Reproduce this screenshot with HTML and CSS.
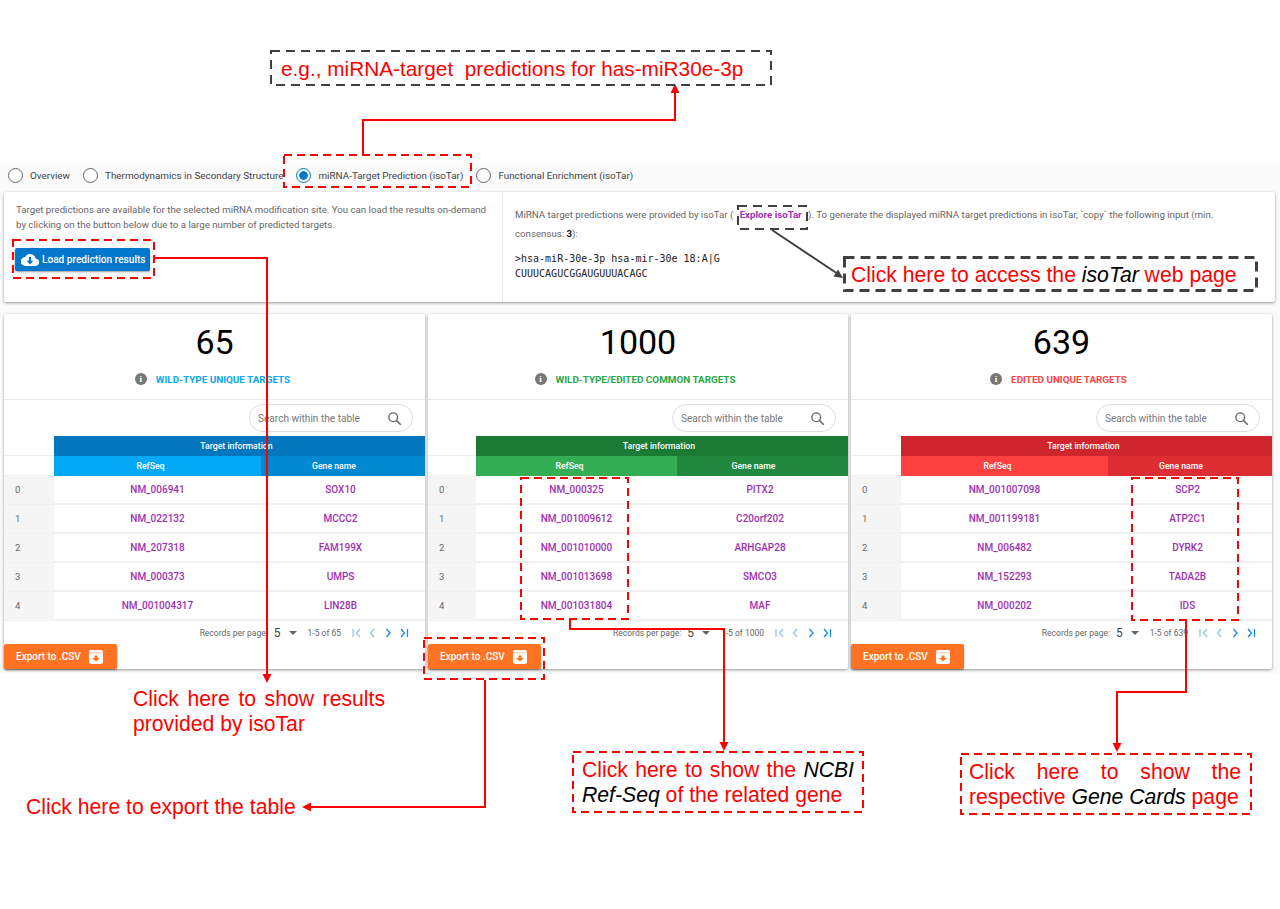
FILE: index.html
```html
<!DOCTYPE html>
<html>
<head>
    <title>miRNA-Target Prediction</title>
    <link rel="stylesheet" href="styles.css">
</head>
<body>
    <div class="page">
        <div class="app">
            <div class="tabs">
                <label class="tab"><span class="radio"></span>Overview</label>
                <label class="tab"><span class="radio"></span>Thermodynamics in Secondary Structure</label>
                <label class="tab"><span class="radio on"></span>miRNA-Target Prediction (isoTar)</label>
                <label class="tab"><span class="radio"></span>Functional Enrichment (isoTar)</label>
            </div>

            <div class="info-card">
                <div class="info-left">
                    <p>Target predictions are available for the selected miRNA modification site. You can load the results on-demand by clicking on the button below due to a large number of predicted targets.</p>
                    <button class="load-btn">
                        <svg width="18" height="14" viewBox="0 0 24 18"><path fill="#fff" d="M19.4 7A7.5 7.5 0 0 0 5.4 5 6 6 0 0 0 6 17h13a5 5 0 0 0 .4-10z"/><path fill="#0277cc" d="M10.5 5h3v5h3L12 15l-4.500-5h3z"/></svg>
                        Load prediction results
                    </button>
                </div>
                <div class="info-right">
                    <p>MiRNA target predictions were provided by isoTar ( <a class="explore">Explore isoTar</a> ). To generate the displayed miRNA target predictions in isoTar, `copy` the following input (min. consensus: <b>3</b>):</p>
                    <pre class="mono">&gt;hsa-miR-30e-3p hsa-mir-30e 18:A|G
CUUUCAGUCGGAUGUUUACAGC</pre>
                </div>
            </div>

            <div class="cards">
                <section class="card blue">
                    <div class="count">65</div>
                    <div class="label"><span class="info-dot">i</span>WILD-TYPE UNIQUE TARGETS</div>
                    <div class="search-row">
                        <div class="search">Search within the table
                            <svg width="15" height="15" viewBox="0 0 24 24"><circle cx="10" cy="10" r="7" fill="none" stroke="#666" stroke-width="2.200"/><path d="M15 15l7 7" stroke="#666" stroke-width="2.400"/></svg>
                        </div>
                    </div>
                    <div class="table">
                        <div class="head-top"><span></span><div class="h1">Target information</div></div>
                        <div class="head-sub"><span></span><div class="h2">RefSeq</div><div class="h3">Gene name</div></div>
                        <div class="row"><span class="idx">0</span><a>NM_006941</a><a>SOX10</a></div>
                        <div class="row"><span class="idx">1</span><a>NM_022132</a><a>MCCC2</a></div>
                        <div class="row"><span class="idx">2</span><a>NM_207318</a><a>FAM199X</a></div>
                        <div class="row"><span class="idx">3</span><a>NM_000373</a><a>UMPS</a></div>
                        <div class="row"><span class="idx">4</span><a>NM_001004317</a><a>LIN28B</a></div>
                    </div>
                    <div class="pager">
                        <span>Records per page:</span><span class="per">5</span><span class="caret"></span><span class="range">1-5 of 65</span>
                        <svg class="nav" width="60" height="10" viewBox="0 0 60 10"><path d="M2 1v8M9 1L5.500 5 9 9" class="dim"/><path d="M23 1l-3.500 4 3.500 4" class="dim"/><path d="M35.500 1L39 5l-3.500 4"/><path d="M50 1l3.500 4L50 9M56.500 1v8"/></svg>
                    </div>
                    <button class="export">Export to .CSV
                        <svg width="14" height="14" viewBox="0 0 14 14"><path fill="#fff" d="M2 0h10a2 2 0 0 1 2 2v10a2 2 0 0 1-2 2H2a2 2 0 0 1-2-2V2a2 2 0 0 1 2-2z"/><path fill="#ff7322" d="M5.500 5.500h3V8H11l-4 3.500L3 8h2.500z"/><path fill="#ffb48c" d="M0 2.500h14v.7H0z"/></svg>
                    </button>
                </section>

                <section class="card green">
                    <div class="count">1000</div>
                    <div class="label"><span class="info-dot">i</span>WILD-TYPE/EDITED COMMON TARGETS</div>
                    <div class="search-row">
                        <div class="search">Search within the table
                            <svg width="15" height="15" viewBox="0 0 24 24"><circle cx="10" cy="10" r="7" fill="none" stroke="#666" stroke-width="2.200"/><path d="M15 15l7 7" stroke="#666" stroke-width="2.400"/></svg>
                        </div>
                    </div>
                    <div class="table">
                        <div class="head-top"><span></span><div class="h1">Target information</div></div>
                        <div class="head-sub"><span></span><div class="h2">RefSeq</div><div class="h3">Gene name</div></div>
                        <div class="row"><span class="idx">0</span><a>NM_000325</a><a>PITX2</a></div>
                        <div class="row"><span class="idx">1</span><a>NM_001009612</a><a>C20orf202</a></div>
                        <div class="row"><span class="idx">2</span><a>NM_001010000</a><a>ARHGAP28</a></div>
                        <div class="row"><span class="idx">3</span><a>NM_001013698</a><a>SMCO3</a></div>
                        <div class="row"><span class="idx">4</span><a>NM_001031804</a><a>MAF</a></div>
                    </div>
                    <div class="pager">
                        <span>Records per page:</span><span class="per">5</span><span class="caret"></span><span class="range">1-5 of 1000</span>
                        <svg class="nav" width="60" height="10" viewBox="0 0 60 10"><path d="M2 1v8M9 1L5.500 5 9 9" class="dim"/><path d="M23 1l-3.500 4 3.500 4" class="dim"/><path d="M35.500 1L39 5l-3.500 4"/><path d="M50 1l3.500 4L50 9M56.500 1v8"/></svg>
                    </div>
                    <button class="export">Export to .CSV
                        <svg width="14" height="14" viewBox="0 0 14 14"><path fill="#fff" d="M2 0h10a2 2 0 0 1 2 2v10a2 2 0 0 1-2 2H2a2 2 0 0 1-2-2V2a2 2 0 0 1 2-2z"/><path fill="#ff7322" d="M5.500 5.500h3V8H11l-4 3.500L3 8h2.500z"/><path fill="#ffb48c" d="M0 2.500h14v.7H0z"/></svg>
                    </button>
                </section>

                <section class="card red">
                    <div class="count">639</div>
                    <div class="label"><span class="info-dot">i</span>EDITED UNIQUE TARGETS</div>
                    <div class="search-row">
                        <div class="search">Search within the table
                            <svg width="15" height="15" viewBox="0 0 24 24"><circle cx="10" cy="10" r="7" fill="none" stroke="#666" stroke-width="2.200"/><path d="M15 15l7 7" stroke="#666" stroke-width="2.400"/></svg>
                        </div>
                    </div>
                    <div class="table">
                        <div class="head-top"><span></span><div class="h1">Target information</div></div>
                        <div class="head-sub"><span></span><div class="h2">RefSeq</div><div class="h3">Gene name</div></div>
                        <div class="row"><span class="idx">0</span><a>NM_001007098</a><a>SCP2</a></div>
                        <div class="row"><span class="idx">1</span><a>NM_001199181</a><a>ATP2C1</a></div>
                        <div class="row"><span class="idx">2</span><a>NM_006482</a><a>DYRK2</a></div>
                        <div class="row"><span class="idx">3</span><a>NM_152293</a><a>TADA2B</a></div>
                        <div class="row"><span class="idx">4</span><a>NM_000202</a><a>IDS</a></div>
                    </div>
                    <div class="pager">
                        <span>Records per page:</span><span class="per">5</span><span class="caret"></span><span class="range">1-5 of 639</span>
                        <svg class="nav" width="60" height="10" viewBox="0 0 60 10"><path d="M2 1v8M9 1L5.500 5 9 9" class="dim"/><path d="M23 1l-3.500 4 3.500 4" class="dim"/><path d="M35.500 1L39 5l-3.500 4"/><path d="M50 1l3.500 4L50 9M56.500 1v8"/></svg>
                    </div>
                    <button class="export">Export to .CSV
                        <svg width="14" height="14" viewBox="0 0 14 14"><path fill="#fff" d="M2 0h10a2 2 0 0 1 2 2v10a2 2 0 0 1-2 2H2a2 2 0 0 1-2-2V2a2 2 0 0 1 2-2z"/><path fill="#ff7322" d="M5.500 5.500h3V8H11l-4 3.500L3 8h2.500z"/><path fill="#ffb48c" d="M0 2.500h14v.7H0z"/></svg>
                    </button>
                </section>
            </div>
        </div>

        <!-- annotations drawn over the screenshot -->
        <svg class="connectors" width="1280" height="909" viewBox="0 0 1280 909">
            <g fill="none" stroke="#f00" stroke-width="2">
                <path d="M363 154V120H675V90"/>
                <path d="M155 258H267V676"/>
                <path d="M485 680V807H308"/>
                <path d="M570 619V629H724V745"/>
                <path d="M1186 620V692H1117V746"/>
            </g>
            <g fill="#f00">
                <path d="M675 84l-4.500 9h9z"/>
                <path d="M267 683l-4.500-9h9z"/>
                <path d="M302 807l9-4.500v9z"/>
                <path d="M724 751l-4.500-9h9z"/>
                <path d="M1117 752l-4.500-9h9z"/>
            </g>
            <path d="M772 230L838 274" stroke="#404040" stroke-width="2" fill="none"/>
            <path d="M843 278l-9.500-1.500 4.500-7z" fill="#404040"/>

            <g fill="none" stroke="#404040" stroke-width="2" stroke-dasharray="9 6">
                <rect x="271" y="51" width="500" height="34"/>
                <rect x="738" y="206" width="69" height="23"/>
            </g>
            <rect x="844.500" y="257.500" width="412" height="33" fill="none" stroke="#404040" stroke-width="3" stroke-dasharray="10 6"/>
            <g fill="none" stroke="#f00" stroke-width="2" stroke-dasharray="8 5">
                <rect x="284" y="155" width="187" height="32"/>
                <rect x="13" y="240" width="141" height="38"/>
                <rect x="424" y="638" width="120" height="41"/>
                <rect x="521" y="478" width="107" height="141"/>
                <rect x="1132" y="478" width="106" height="142"/>
                <rect x="573" y="752" width="290" height="60"/>
                <rect x="961" y="754" width="290" height="60"/>
            </g>
        </svg>

        <div class="note n-species">e.g., miRNA-target&nbsp; predictions for has-miR30e-3p</div>
        <div class="note n-access">Click here to access the <i>isoTar</i> web page</div>
        <div class="note n-results">Click here to show results provided by isoTar</div>
        <div class="note n-csv">Click here to export the table</div>
        <div class="note n-ncbi">Click here to show the <i>NCBI Ref-Seq</i> of the related gene</div>
        <div class="note n-cards">Click here to show the respective <i>Gene Cards</i> page</div>
    </div>
</body>
</html>
```

FILE: styles.css
```css
* {
    box-sizing: border-box;
}

body {
    margin: 0;
    background-color: #fff;
    font-family: Roboto, "Liberation Sans", sans-serif;
}

.page {
    position: relative;
    width: 1280px;
    height: 909px;
    padding-top: 163px;
    overflow: hidden;
}

.app {
    background-color: #fafafa;
    height: 511px;
    padding: 0 4px;
    color: #666;
    font-size: 9.700px;
}

/* tab row */
.tabs {
    display: flex;
    gap: 13px;
    height: 25px;
    margin-bottom: 4px;
    padding-left: 4px;
    align-items: center;
}

.tab {
    display: flex;
    align-items: center;
    gap: 7px;
    color: #444;
    font-size: 9.900px;
}

.radio {
    width: 15px;
    height: 15px;
    border: 1px solid #666;
    border-radius: 50%;
    background-color: #fff;
}

.radio.on {
    border: 1.5px solid #0277cc;
    background: radial-gradient(circle, #0277cc 0 4px, #fff 4.600px);
}

/* top card */
.info-card {
    display: grid;
    grid-template-columns: 499px 1fr;
    width: 1271px;
    height: 110px;
    background-color: #fff;
    border-radius: 2px;
    box-shadow: 0 1px 3px rgba(0, 0, 0, 0.4);
}

.info-left {
    padding: 10px 10px 0 12px;
    border-right: 1px solid #e8e8e8;
}

.info-left p {
    margin: 0;
    line-height: 15px;
}

.load-btn {
    display: flex;
    align-items: center;
    gap: 3px;
    width: 135px;
    height: 23px;
    margin: 16px 0 0 -1px;
    padding: 0 0 0 6px;
    border: none;
    border-radius: 2px;
    background-color: #0277cc;
    color: #fff;
    font: 500 10.100px Roboto, sans-serif;
    box-shadow: 0 1px 2px rgba(0, 0, 0, 0.4);
}

.info-right {
    padding: 13px 50px 0 12px;
}

.info-right p {
    margin: 0;
    line-height: 19px;
}

.info-right b {
    color: #222;
}

.explore {
    margin: 0 4px;
    color: #a02fb4;
    font-weight: 700;
}

.mono {
    margin: 8px 0 0;
    color: #222;
    font: 10px/15px "DejaVu Sans Mono", monospace;
}

/* the three result cards */
.cards {
    display: grid;
    grid-template-columns: 421px 420px 421px;
    gap: 3px;
    margin-top: 12px;
}

.card {
    position: relative;
    height: 355px;
    background-color: #fff;
    border-radius: 2px;
    box-shadow: 0 1px 3px rgba(0, 0, 0, 0.4);
}

.count {
    padding-top: 8px;
    height: 48px;
    color: #000;
    font-size: 34px;
    line-height: 40px;
    text-align: center;
}

.label {
    display: flex;
    justify-content: center;
    align-items: center;
    gap: 9px;
    height: 38px;
    padding-bottom: 3px;
    border-bottom: 1px solid #e8e8e8;
    font-size: 9.900px;
    font-weight: 700;
}

.blue .label { color: #03a9f4; padding-right: 4px; }
.green .label { color: #28a745; padding-right: 6px; }
.red .label { color: #ff4444; padding-right: 6px; }

.info-dot {
    width: 12px;
    height: 12px;
    border-radius: 50%;
    background-color: #777;
    color: #fff;
    font: 700 9px/12px "Liberation Serif", serif;
    text-align: center;
}

.search-row {
    display: flex;
    justify-content: flex-end;
    height: 36px;
    padding: 4px 12px 0 0;
}

.search {
    display: flex;
    justify-content: space-between;
    align-items: center;
    width: 164px;
    height: 28px;
    padding: 0 10px 0 8px;
    border: 1px solid #ddd;
    border-radius: 14px;
    color: #777;
    font-size: 10.100px;
}

.head-top,
.head-sub,
.row {
    display: grid;
    grid-template-columns: 50px 207px 1fr;
}

.green .head-top,
.green .head-sub,
.green .row {
    grid-template-columns: 48px 201px 1fr;
}

.head-top {
    height: 20px;
    grid-template-columns: 50px 1fr;
    border-bottom: 1px solid #eee;
}

.green .head-top {
    grid-template-columns: 48px 1fr;
}

.head-sub {
    height: 20px;
    border-bottom: 1px solid #eee;
}

.h1,
.h2,
.h3 {
    padding-right: 14px;
    color: #fff;
    font-size: 8.700px;
    font-weight: 500;
    line-height: 20px;
    text-align: center;
}

.h1 {
    padding-right: 6px;
}

.h3 {
    padding-right: 18px;
}

.blue .h1 { background-color: #0277bd; }
.blue .h2 { background-color: #03a9f4; }
.blue .h3 { background-color: #0288d1; }
.green .h1 { background-color: #1b7a34; }
.green .h2 { background-color: #34ae55; }
.green .h3 { background-color: #23883f; }
.red .h1 { background-color: #cf252c; }
.red .h2 { background-color: #ff4040; }
.red .h3 { background-color: #dc2d33; }

.row {
    height: 29px;
    border-bottom: 2px solid #f0f0f0;
    line-height: 28px;
    text-align: center;
}

.row a {
    color: #a02fb4;
    font-size: 10px;
    font-weight: 500;
}

.row a:last-child {
    padding-right: 5px;
}

.idx {
    padding-left: 11px;
    background-color: #f5f5f5;
    color: #666;
    font-size: 9.500px;
    text-align: left;
}

.pager {
    display: flex;
    justify-content: flex-end;
    align-items: center;
    height: 23px;
    padding-right: 14px;
    font-size: 8.500px;
}

.per {
    margin-left: 6px;
    color: #444;
    font-size: 12px;
}

.caret {
    width: 0;
    height: 0;
    margin: 0 11px 0 8px;
    border: 4px solid transparent;
    border-top-color: #666;
    border-bottom: none;
}

.nav {
    margin-left: 10px;
    fill: none;
    stroke: #1e88e5;
    stroke-width: 1.300;
}

.nav .dim {
    stroke: #90c4f0;
}

.export {
    position: absolute;
    left: 0;
    bottom: 0;
    display: flex;
    align-items: center;
    justify-content: space-between;
    width: 113px;
    height: 25px;
    padding: 0 14px 0 12px;
    border: none;
    border-radius: 2px;
    background-color: #ff7322;
    color: #fff;
    font: 500 10px Roboto, sans-serif;
    box-shadow: 0 1px 2px rgba(0, 0, 0, 0.4);
}

/* annotations */
.connectors {
    position: absolute;
    top: 0;
    left: 0;
}

.note {
    position: absolute;
    color: #f00;
    font-family: "Liberation Sans", Arial, sans-serif;
    font-size: 21.200px;
    line-height: 25px;
}

.note i {
    color: #000;
}

.n-species { left: 281px; top: 56px; font-size: 20.800px; white-space: nowrap; }
.n-access { left: 851px; top: 262px; white-space: nowrap; }
.n-results { left: 133px; top: 686px; width: 252px; text-align: justify; }
.n-csv { left: 26px; top: 794px; }
.n-ncbi { left: 582px; top: 757px; width: 272px; text-align: justify; }
.n-cards { left: 969px; top: 759px; width: 272px; text-align: justify; }
```
